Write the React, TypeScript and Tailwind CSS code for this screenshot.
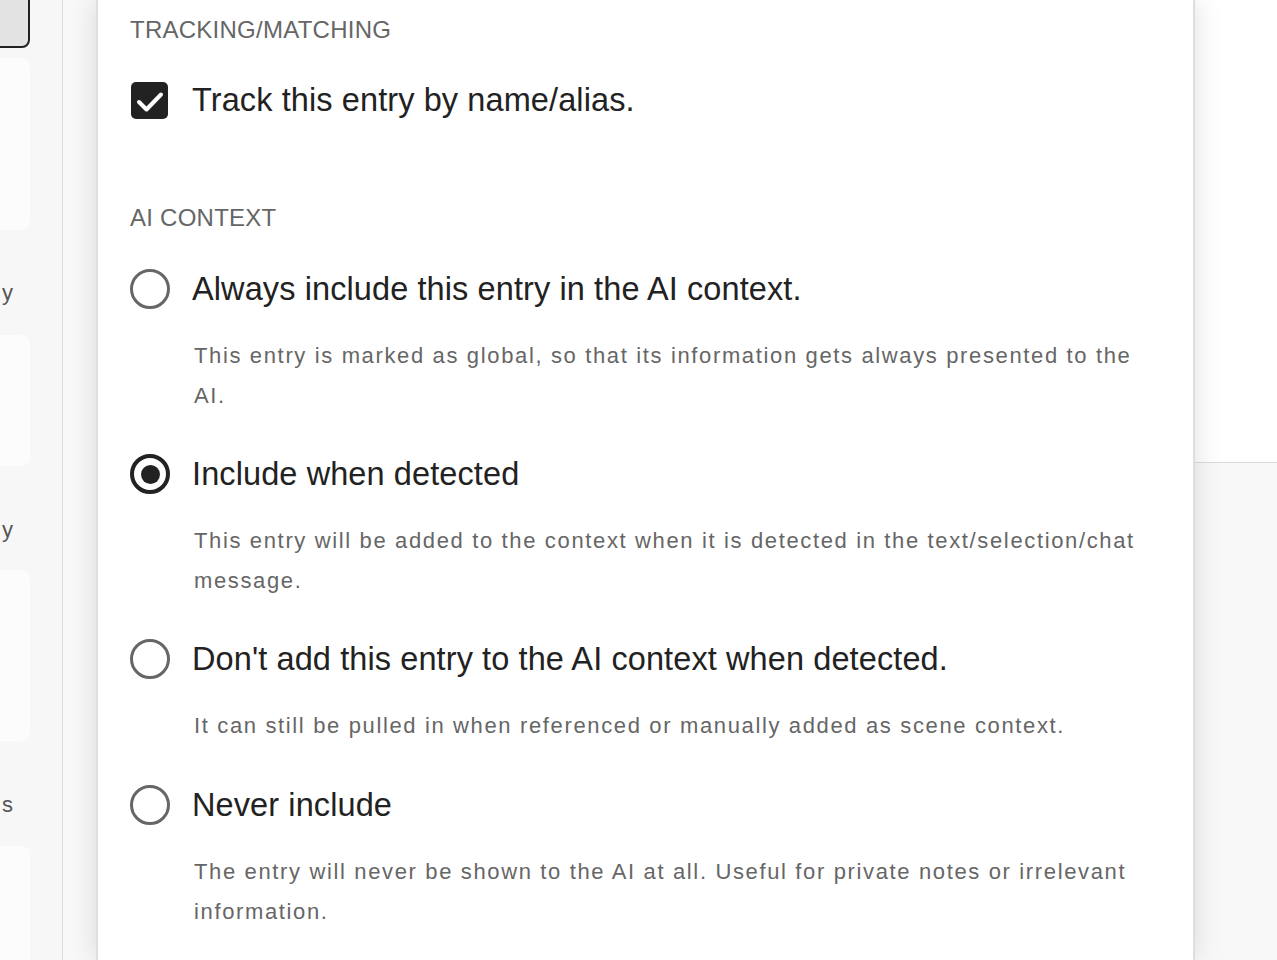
import React from "react";

const options = [
  {
    label: "Always include this entry in the AI context.",
    desc: "This entry is marked as global, so that its information gets always presented to the AI.",
    selected: false,
  },
  {
    label: "Include when detected",
    desc: "This entry will be added to the context when it is detected in the text/selection/chat message.",
    selected: true,
  },
  {
    label: "Don't add this entry to the AI context when detected.",
    desc: "It can still be pulled in when referenced or manually added as scene context.",
    selected: false,
  },
  {
    label: "Never include",
    desc: "The entry will never be shown to the AI at all. Useful for private notes or irrelevant information.",
    selected: false,
  },
];

function Radio({ selected }: { selected: boolean }) {
  if (selected) {
    return (
      <div className="w-[40px] h-[40px] shrink-0 rounded-full border-[4px] border-[#222] flex items-center justify-center">
        <div className="w-[19px] h-[19px] rounded-full bg-[#222]" />
      </div>
    );
  }
  return <div className="w-[40px] h-[40px] shrink-0 rounded-full border-[3px] border-[#666]" />;
}

function SideLabel({ text }: { text: string }) {
  return (
    <div className="h-[30px] w-[13px] flex justify-end items-center">
      <span className="whitespace-nowrap text-[22px] leading-[30px] text-[#555]">{text}</span>
    </div>
  );
}

export default function App() {
  return (
    <div className="w-[1277px] h-[960px] relative overflow-hidden flex font-['Liberation_Sans',Arial,sans-serif] bg-[#f7f7f7]">
      {/* left sidebar */}
      <div className="w-[63px] shrink-0 h-full bg-[#f7f7f7] border-r border-[#dadada] flex flex-col overflow-hidden">
        <div className="-ml-[12px] -mt-[12px] w-[42px] h-[60px] shrink-0 rounded-[8px] border-2 border-[#222] bg-[#e3e3e3]" />
        <div className="-ml-[12px] mt-[10px] w-[42px] h-[172px] shrink-0 rounded-[8px] bg-[#fcfcfc]" />
        <div className="mt-[48px]">
          <SideLabel text="y" />
        </div>
        <div className="-ml-[12px] mt-[27px] w-[42px] h-[131px] shrink-0 rounded-[8px] bg-[#fcfcfc]" />
        <div className="mt-[49px]">
          <SideLabel text="y" />
        </div>
        <div className="-ml-[12px] mt-[25px] w-[42px] h-[171px] shrink-0 rounded-[8px] bg-[#fcfcfc]" />
        <div className="mt-[49px]">
          <SideLabel text="s" />
        </div>
        <div className="-ml-[12px] mt-[26px] w-[42px] h-[200px] shrink-0 rounded-[8px] bg-[#fcfcfc]" />
      </div>

      {/* background main area */}
      <div className="flex-1 h-full bg-[#f8f8f8] flex flex-col">
        <div className="ml-[400px] h-[463px] bg-white border-b border-[#dcdcdc]" />
      </div>

      {/* modal panel overlay */}
      <div className="absolute left-[96px] top-0 w-[1099px] h-full bg-white border-x-2 border-[#dedede] shadow-[0_0_26px_rgba(0,0,0,0.13)]">
        <div className="pl-[32px] pr-[31px] pt-[16px]">
          <div className="text-[24px] leading-[28px] tracking-[0.25px] text-[#666]">TRACKING/MATCHING</div>

          <div className="mt-[36px] h-[40px] flex items-center">
            <div className="ml-[1px] w-[37px] h-[37px] rounded-[5px] bg-[#222] flex items-center justify-center">
              <svg width="37" height="37" viewBox="0 0 37 37" fill="none">
                <path d="M8 20l7.5 7.5L30 12.5" stroke="#fff" strokeWidth="4" strokeLinecap="round" strokeLinejoin="round" />
              </svg>
            </div>
            <span className="ml-[24px] text-[32.5px] leading-[40px] tracking-[0.1px] text-[#222]">Track this entry by name/alias.</span>
          </div>

          <div className="mt-[84px] text-[24px] leading-[28px] tracking-[0.25px] text-[#666]">AI CONTEXT</div>

          {options.map((o, i) => (
            <div key={i} className={i === 0 ? "mt-[37px]" : i === 3 ? "mt-[39px]" : "mt-[38px]"}>
              <div className="h-[40px] flex items-center">
                <Radio selected={o.selected} />
                <span className="ml-[22px] text-[32.5px] leading-[40px] tracking-[0.1px] text-[#222] whitespace-nowrap">{o.label}</span>
              </div>
              <div className="ml-[64px] mt-[27px] text-[22px] leading-[40px] tracking-[1.64px] text-[#666]">{o.desc}</div>
            </div>
          ))}
        </div>
      </div>
    </div>
  );
}
